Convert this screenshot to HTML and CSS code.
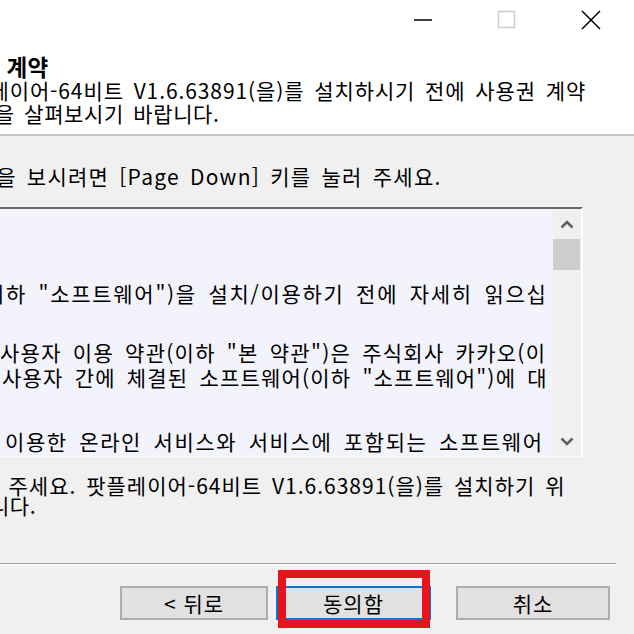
FILE: index.html
```html
<!DOCTYPE html>
<html lang="ko">
<head>
    <meta charset="UTF-8">
    <meta name="viewport" content="width=device-width, initial-scale=1.0">
    <title>팟플레이어-64비트 설치</title>
    <link rel="stylesheet" href="styles.css">
</head>
<body>
    <div class="window">
        <div class="titlebar">
            <div class="caption-btn">
                <svg width="20" height="4" viewBox="0 0 20 4"><line x1="1" y1="2" x2="19" y2="2" stroke="#000" stroke-width="1.5"/></svg>
            </div>
            <div class="caption-btn">
                <svg width="20" height="20" viewBox="0 0 20 20"><rect x="1.5" y="1.5" width="16" height="16" fill="none" stroke="#cccccc" stroke-width="1.5"/></svg>
            </div>
            <div class="caption-btn">
                <svg width="20" height="20" viewBox="0 0 20 20"><path d="M1 1 L19 19 M19 1 L1 19" stroke="#000" stroke-width="1.5"/></svg>
            </div>
        </div>

        <div class="header">
            <div class="title">사용권 계약</div>
            <div class="line sub-1">팟플레이어-64비트 V1.6.63891(을)를 설치하시기 전에 사용권 계약</div>
            <div class="line sub-2">내용을 살펴보시기 바랍니다.</div>
        </div>

        <div class="content">
            <div class="line hint">부분을 보시려면 [Page Down] 키를 눌러 주세요.</div>

            <div class="license">
                <div class="license-text">
                    <div class="para para-a">이하 "소프트웨어")을 설치/이용하기 전에 자세히 읽으십</div>
                    <div class="para para-b">사용자 이용 약관(이하 "본 약관")은 주식회사 카카오(이</div>
                    <div class="para para-c">사용자 간에 체결된 소프트웨어(이하 "소프트웨어")에 대</div>
                    <div class="para para-d">이용한 온라인 서비스와 서비스에 포함되는 소프트웨어</div>
                </div>
                <div class="scrollbar">
                    <div class="arrow">
                        <svg width="14" height="9" viewBox="0 0 14 9"><polyline points="1.5,7.5 7,2 12.5,7.5" fill="none" stroke="#606060" stroke-width="2.6"/></svg>
                    </div>
                    <div class="thumb"></div>
                    <div class="track"></div>
                    <div class="arrow">
                        <svg width="14" height="9" viewBox="0 0 14 9"><polyline points="1.5,1.5 7,7 12.5,1.5" fill="none" stroke="#606060" stroke-width="2.6"/></svg>
                    </div>
                </div>
            </div>

            <div class="line accept-1">눌러 주세요. 팟플레이어-64비트 V1.6.63891(을)를 설치하기 위</div>
            <div class="line accept-2">합니다.</div>
        </div>

        <div class="footer">
            <div class="separator"></div>
            <div class="buttons">
                <button class="back">&lt; 뒤로</button>
                <button class="agree">동의함<span class="highlight"></span></button>
                <button class="cancel">취소</button>
            </div>
        </div>
    </div>
</body>
</html>
```

FILE: styles.css
```css
* {
    margin: 0;
    padding: 0;
    box-sizing: border-box;
}

body {
    width: 634px;
    height: 634px;
    overflow: hidden;
    background: #f0f0f0;
    font-family: 'Noto Sans CJK KR', sans-serif;
    color: #000;
}

.window {
    width: 634px;
}

/* title bar */
.titlebar {
    height: 40px;
    background: #fff;
    display: flex;
    justify-content: flex-end;
    padding-right: 1px;
}

.caption-btn {
    width: 84px;
    height: 40px;
    display: flex;
    align-items: center;
    justify-content: center;
    padding-bottom: 1px;
}

/* header */
.header {
    height: 96px;
    background: #fff;
    border-bottom: 2px solid #c4c4c4;
    padding-top: 14px;
    white-space: nowrap;
}

.title {
    font-size: 22.5px;
    font-weight: 700;
    letter-spacing: 0.5px;
    word-spacing: 1px;
    line-height: 25px;
    margin-left: -65px;
}

.line {
    font-size: 21px;
    letter-spacing: 0.6px;
    word-spacing: 3px;
    line-height: 23px;
    white-space: nowrap;
}

.sub-1 {
    margin-left: -51px;
    letter-spacing: 0.9px;
}

.sub-2 {
    margin-left: -45px;
}

/* body */
.content {
    white-space: nowrap;
}

.hint {
    margin-top: 28px;
    line-height: 24px;
    margin-left: -45px;
    letter-spacing: 1.25px;
}

.license {
    margin-top: 19px;
    margin-left: -20px;
    width: 603px;
    height: 250px;
    display: flex;
    background: #f3f3fb;
    border-top: 2px solid #6a6a6a;
    border-right: 2px solid #fbfbfb;
    border-bottom: 1px solid #fbfbfb;
}

.license-text {
    flex: 1;
    overflow: hidden;
    padding-left: 20px;
}

.para {
    font-size: 21px;
    letter-spacing: 1px;
    word-spacing: 4px;
    line-height: 25px;
    white-space: nowrap;
}

.para-a {
    margin-top: 72px;
    margin-left: -15px;
    letter-spacing: 1.7px;
}

.para-b {
    margin-top: 34px;
    margin-left: 0;
    letter-spacing: 1.25px;
}

.para-c {
    margin-left: 2px;
    letter-spacing: 1.2px;
}

.para-d {
    margin-top: 39px;
    margin-left: 5px;
    letter-spacing: 1.6px;
}

.scrollbar {
    width: 28px;
    background: #f0f0f0;
    display: flex;
    flex-direction: column;
}

.arrow {
    height: 30px;
    display: flex;
    align-items: center;
    justify-content: center;
}

.thumb {
    height: 31px;
    margin-right: 1px;
    background: #cdcdcd;
}

.track {
    flex: 1;
}

.accept-1 {
    margin-top: 18px;
    line-height: 20px;
    margin-left: -42px;
    letter-spacing: 1px;
}

.accept-2 {
    line-height: 20px;
    margin-left: -30px;
}

/* footer */
.separator {
    margin-top: 48px;
    width: 616px;
    border-top: 1px solid #a0a0a0;
    border-bottom: 1px solid #fff;
}

.buttons {
    margin-top: 21px;
    display: flex;
    justify-content: flex-end;
    padding-right: 24px;
}

button {
    height: 34px;
    font-family: 'Noto Sans CJK KR', sans-serif;
    font-size: 21px;
    letter-spacing: 1px;
    line-height: 28px;
    color: #000;
    background: #e1e1e1;
    border: 2px solid #adadad;
}

.back {
    width: 148px;
}

.agree {
    width: 155px;
    margin-left: 8px;
    border-color: #0078d7;
    position: relative;
}

.cancel {
    width: 154px;
    margin-left: 25px;
}

.highlight {
    position: absolute;
    left: 0;
    top: -18px;
    width: 152px;
    height: 58px;
    border: 8px solid #e8141c;
}
```
